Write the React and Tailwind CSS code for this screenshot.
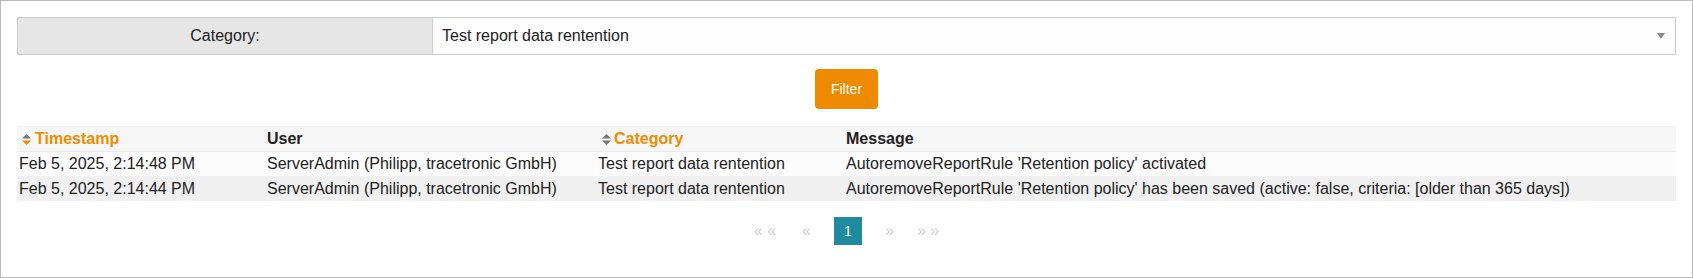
import React from "react";

const rows = [
  {
    time: "Feb 5, 2025, 2:14:48 PM",
    user: "ServerAdmin (Philipp, tracetronic GmbH)",
    category: "Test report data rentention",
    message: "AutoremoveReportRule 'Retention policy' activated",
  },
  {
    time: "Feb 5, 2025, 2:14:44 PM",
    user: "ServerAdmin (Philipp, tracetronic GmbH)",
    category: "Test report data rentention",
    message:
      "AutoremoveReportRule 'Retention policy' has been saved (active: false, criteria: [older than 365 days])",
  },
];

function SortIcon({ active }) {
  return (
    <svg width="9" height="11" viewBox="0 0 9 11" className="shrink-0">
      <polygon points="4.5,0 9,4.5 0,4.5" fill="#777" />
      <polygon points="0,6.5 9,6.5 4.5,11" fill={active ? "#f08c00" : "#777"} />
    </svg>
  );
}

export default function App() {
  return (
    <div className="w-[1693px] h-[278px] border border-[#bbb] bg-white px-4 pt-4 font-['Liberation_Sans',Arial,sans-serif] text-[#222]">
      {/* Category select */}
      <div className="flex h-[38px] border border-[#ccc] text-[16px]">
        <div className="w-[415px] bg-[#e6e6e6] border-r border-[#d0d0d0] flex items-center justify-center">
          Category:
        </div>
        <div className="flex-1 bg-[#fdfdfd] flex items-center justify-between pl-[9px] pr-[10px]">
          <span>Test report data rentention</span>
          <svg width="8" height="6" viewBox="0 0 8 6">
            <polygon points="0,0 8,0 4,6" fill="#888" />
          </svg>
        </div>
      </div>

      {/* Filter button */}
      <div className="mt-[14px] flex justify-center">
        <button className="h-[40px] w-[63px] rounded-[4px] bg-[#ee8a00] text-white text-[14px]">
          Filter
        </button>
      </div>

      {/* Log table */}
      <div className="mt-[17px] text-[16px]">
        <div className="grid grid-cols-[248px_331px_248px_1fr] h-[26px] items-center bg-[#f6f6f6] border-t border-[#f0f0f0] border-b border-b-[#ebebeb] font-bold">
          <div className="flex items-center pl-[5px] gap-[4px] text-[#f08c00]">
            <SortIcon active />
            <span>Timestamp</span>
          </div>
          <div className="pl-[2px]">User</div>
          <div className="flex items-center pl-[6px] gap-[3px] text-[#f08c00]">
            <SortIcon />
            <span>Category</span>
          </div>
          <div className="pl-[2px]">Message</div>
        </div>
        {rows.map((r, i) => (
          <div
            key={i}
            className={`grid grid-cols-[248px_331px_248px_1fr] items-center ${
              i % 2 === 0 ? "h-[24px] bg-[#fcfcfc]" : "h-[25px] bg-[#f0f0f0]"
            }`}
          >
            <div className="pl-[2px]">{r.time}</div>
            <div className="pl-[2px]">{r.user}</div>
            <div className="pl-[2px]">{r.category}</div>
            <div className="pl-[2px] whitespace-nowrap">{r.message}</div>
          </div>
        ))}
      </div>

      {/* Pagination */}
      <div className="mt-[16px] flex justify-center items-center gap-[23px] text-[16px] text-[#cfcfcf]">
        <span className="mr-[3px]">« «</span>
        <span>«</span>
        <span className="h-[28px] w-[28px] flex items-center justify-center bg-[#1e8ba0] text-white text-[14px]">1</span>
        <span>»</span>
        <span>» »</span>
      </div>
    </div>
  );
}
